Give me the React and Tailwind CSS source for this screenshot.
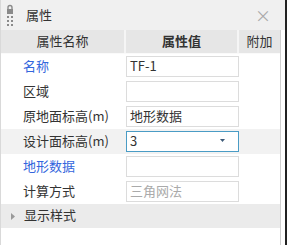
const rows = [
  { name: "名称", value: "TF-1", blue: true },
  { name: "区域", value: "" },
  { name: "原地面标高(m)", value: "地形数据" },
  { name: "设计面标高(m)", value: "3", select: true },
  { name: "地形数据", value: "", blue: true },
  { name: "计算方式", value: "三角网法", muted: true },
];

const LockGrip = () => (
  <svg width="8" height="24" viewBox="0 0 8 24" className="shrink-0">
    <path d="M2 6 V4.5 a2 2 0 0 1 4 0 V6" fill="none" stroke="#8a8a8a" strokeWidth="1.4" />
    <rect x="1" y="6" width="6" height="5" fill="#8a8a8a" />
    <rect x="1" y="13" width="2" height="2" fill="#8a8a8a" />
    <rect x="5" y="13" width="2" height="2" fill="#8a8a8a" />
    <rect x="1" y="17" width="2" height="2" fill="#8a8a8a" />
    <rect x="5" y="17" width="2" height="2" fill="#8a8a8a" />
    <rect x="1" y="21" width="2" height="2" fill="#8a8a8a" />
    <rect x="5" y="21" width="2" height="2" fill="#8a8a8a" />
  </svg>
);

export default function App() {
  return (
    <div
      className="w-[287px] h-[245px] bg-white flex overflow-hidden text-[13px] text-[#333]"
      style={{ fontFamily: '"Noto Sans CJK SC", "Noto Sans", sans-serif' }}
    >
      <div className="flex-1 flex flex-col border-l border-[#d9d9d9]">
        <div className="h-[30px] bg-[#f0f0f0] flex items-center pl-[5px] pr-[14px] shrink-0">
          <LockGrip />
          <span className="ml-[12px] pb-[1px] text-[13px] text-[#333]">属性</span>
          <span className="ml-auto text-[16px] leading-none text-[#aaa]">×</span>
        </div>
        <div className="flex flex-1">
          <div className="w-[279px] flex flex-col">
            <div className="h-[24px] flex bg-[#e6e6e6] border-b border-[#fafafa] shrink-0">
              <div className="w-[125px] flex items-center justify-center pb-[1px] border-r-2 border-[#f5f5f5]">属性名称</div>
              <div className="w-[113px] flex items-center justify-center pb-[1px] font-semibold border-r-2 border-[#f5f5f5]">属性值</div>
              <div className="flex-1 flex items-center justify-center pb-[1px]">附加</div>
            </div>
            {rows.map((r) => (
              <div
                key={r.name}
                className={`h-[25px] flex items-center ${r.select ? "bg-[#f2f2f2]" : ""}`}
              >
                <div className={`w-[125px] pl-[22px] pb-[2px] ${r.blue ? "text-[#3366dd]" : ""}`}>{r.name}</div>
                <div
                  className={`w-[113px] h-[21px] flex items-center px-[3px] pb-[1px] bg-white border ${
                    r.select ? "border-[#4a9cc5]" : "border-[#dcdcdc]"
                  } ${r.muted ? "text-[#aaa]" : ""}`}
                >
                  <span className="flex-1">{r.value}</span>
                  {r.select && (
                    <svg width="5" height="4" viewBox="0 0 5 4" className="mr-[10px]">
                      <path d="M0 0 H5 L2.5 3 Z" fill="#3d5a78" />
                    </svg>
                  )}
                </div>
              </div>
            ))}
            <div className="h-[24px] bg-[#ebebeb] flex items-center pl-[10px]">
              <svg width="4" height="7" viewBox="0 0 4 7">
                <path d="M0 0 L4 3.5 L0 7 Z" fill="#999" />
              </svg>
              <span className="ml-[9px] pb-[2px]">显示样式</span>
            </div>
          </div>
          <div className="w-[1px] bg-[#d0d0d0]" />
          <div className="flex-1" />
        </div>
      </div>
      <div className="w-[2px] bg-[#222]" />
    </div>
  );
}
